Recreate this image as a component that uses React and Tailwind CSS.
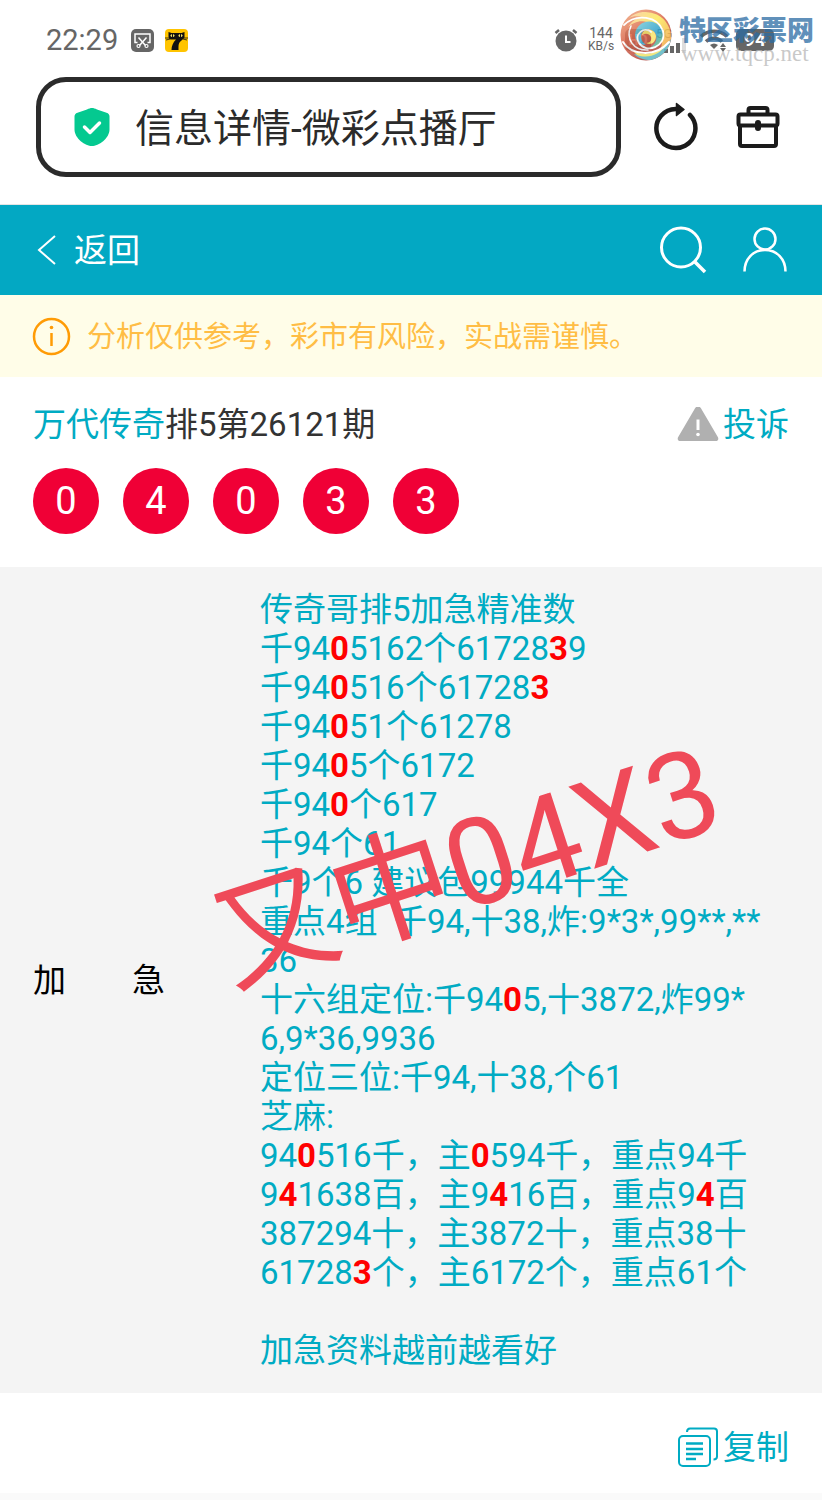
import { useState } from "react";

const BALLS = ["0", "4", "0", "3", "3"];

// [x] marks a digit that hit
const LINES = [
  "传奇哥排5加急精准数",
  "千94[0]5162个61728[3]9",
  "千94[0]516个61728[3]",
  "千94[0]51个61278",
  "千94[0]5个6172",
  "千94[0]个617",
  "千94个61",
  "千9个6 建议包99944千全",
  "重点4组  千94,十38,炸:9*3*,99**,**",
  "36",
  "十六组定位:千94[0]5,十3872,炸99*",
  "6,9*36,9936",
  "定位三位:千94,十38,个61",
  "芝麻:",
  "94[0]516千，主[0]594千，重点94千",
  "9[4]1638百，主9[4]16百，重点9[4]百",
  "387294十，主3872十，重点38十",
  "61728[3]个，主6172个，重点61个",
  "",
  "加急资料越前越看好",
];

function Line({ text }) {
  const parts = text.split(/\[(\d)\]/);
  return (
    <p className="min-h-[39px]">
      {parts.map((part, i) =>
        i % 2 ? (
          <b key={i} className="font-bold text-[#ff0000]">
            {part}
          </b>
        ) : (
          part
        )
      )}
    </p>
  );
}

function StatusBar() {
  return (
    <div className="flex items-center justify-between pl-[46px] pr-12 pt-[22px] h-[58px] text-[#666666]">
      <div className="flex items-center">
        <span className="text-[29px] leading-9 w-[73px]">22:29</span>
        <svg className="ml-3 w-[23px] h-[23px]" viewBox="0 0 23 23" fill="none">
          <rect width="23" height="23" rx="5" fill="#666" />
          <path d="M6.500 13.500H4V5h15v8.500h-2.500" stroke="#fff" strokeWidth="1.500" />
          <path d="M7.500 8.500l7 8M15.500 8.500l-7 8" stroke="#fff" strokeWidth="1.500" />
          <circle cx="7.500" cy="17" r="1.500" stroke="#fff" strokeWidth="1.200" />
          <circle cx="15.500" cy="17" r="1.500" stroke="#fff" strokeWidth="1.200" />
        </svg>
        <svg className="ml-[11px] w-[23px] h-[23px]" viewBox="0 0 23 23">
          <rect width="23" height="23" rx="4" fill="#ffc400" />
          <path d="M3.500 3l3 1h10l3-1v5.500c-2 2.500-3.500 3-5 5-1.200 2-1 4-1 7.500H6.500c0-4 1.500-7.500 4.500-10.500H5.500C4 10 3.500 8 3.500 7z" fill="#111" />
          <path d="M0 9h5M1 11l4-1M18 9h5M18 10l4 1" stroke="#111" strokeWidth=".8" />
          <ellipse cx="7.500" cy="6.500" rx="2" ry="1.500" fill="#f5e26a" />
          <ellipse cx="15.500" cy="6.500" rx="2" ry="1.500" fill="#f5e26a" />
          <path d="M7.500 5v3M15.500 5v3" stroke="#111" strokeWidth="1" />
        </svg>
      </div>
      <div className="flex items-center">
        <svg className="w-[24px] h-[24px]" viewBox="0 0 24 24" fill="none">
          <circle cx="12" cy="13" r="10.500" fill="#666" />
          <path d="M1.500 5L5 2M22.500 5L19 2" stroke="#666" strokeWidth="2.500" />
          <path d="M12 7.500V14h4.500" stroke="#fff" strokeWidth="2" />
        </svg>
        <div className="ml-[9px] w-[28px] text-center text-[14px] leading-[13px]">
          <div>144</div>
          <div className="text-[12px]">KB/s</div>
        </div>
        <div className="ml-[10px] w-[26px] h-[22px] rounded-[5px] bg-[#666666] text-white text-[14px] leading-[22px] text-center font-bold">
          HD
        </div>
        <div className="ml-[5px] flex h-[26px] w-[34px] flex-col">
          <span className="text-[13px] leading-[13px]">5G</span>
          <svg className="-mt-[3px] ml-2 w-[26px] h-[16px]" viewBox="0 0 26 16" fill="#666">
            <path d="M0 12h4v4H0zM6 9h4v7H6zM12 6h4v10h-4z" />
            <path d="M18 1h4v15h-4z" fill="#ddd" />
          </svg>
        </div>
        <svg className="ml-[10px] w-[28px] h-[24px]" viewBox="0 0 28 24" fill="none" stroke="#666" strokeWidth="3.500">
          <path d="M1 8.500c7-7 19-7 26 0" />
          <path d="M6 13.500c4.500-4.500 11.500-4.500 16 0" />
          <path d="M10 17q4-3 8 0l-4 4z" fill="#666" stroke="none" />
          <path d="M23 15l3 4h-6zM23 24l3-4h-6z" fill="#666" stroke="none" />
        </svg>
        <div className="ml-2 w-[38px] h-[22px] rounded-[5px] bg-[#666666] text-white text-[19px] leading-[22px] text-center font-bold">
          94
        </div>
      </div>
    </div>
  );
}

function SiteMark() {
  return (
    <div className="absolute top-[9px] right-[8px] flex items-start gap-[7px]">
      <svg className="w-[52px] h-[52px] opacity-85" viewBox="0 0 52 52">
        <defs>
          <linearGradient id="markRed" x1="0" y1="0" x2=".6" y2="1">
            <stop offset="0" stopColor="#f4b184" />
            <stop offset=".5" stopColor="#d9654a" />
            <stop offset="1" stopColor="#a8403a" />
          </linearGradient>
          <linearGradient id="markYellow" x1="0" y1="0" x2="1" y2=".8">
            <stop offset="0" stopColor="#f9c9a4" />
            <stop offset=".5" stopColor="#fde95a" />
            <stop offset="1" stopColor="#f0a04a" />
          </linearGradient>
          <linearGradient id="markBlue" x1="0" y1="0" x2="1" y2="1">
            <stop offset="0" stopColor="#7fd0d8" />
            <stop offset=".6" stopColor="#2d9fcb" />
            <stop offset="1" stopColor="#8ccb62" />
          </linearGradient>
        </defs>
        <circle cx="26" cy="26" r="25.500" fill="url(#markRed)" />
        <path d="M9 9A25.500 25.500 0 0 1 51 30C47 40 43 43 38 45C47 31 40 16 27 13C19 11 13 14 8 18C12 12 16 9 22 8C17 7 13 7 9 9z" fill="url(#markYellow)" />
        <path d="M51 30A25.500 25.500 0 0 1 31 51C24 51 18 49 14 45C31 48 43 42 51 30z" fill="#5cb7c4" />
        <path d="M45 36C37 45 24 47 13 42L17 46C28 50 40 46 45 36z" fill="#efe36a" />
        <path d="M15 26A14 14 0 0 1 43 27C43 35 36 40 29 39C36 36 38 29 35 24C31 18 22 19 21 27C21 31 23 34 26 36C19 36 15 31 15 26z" fill="url(#markBlue)" />
        <path d="M22 26C23 18 35 19 36 27C36 33 31 37 26 34C30 34 32 31 31 28C29 24 25 24 22 26z" fill="#fbe36a" />
        <g fill="none" stroke="#fff" strokeLinecap="round">
          <path d="M4 16C16 4 38 7 43 22C47 38 26 45 19 34C14 25 24 17 31 23" strokeWidth="1.800" />
          <path d="M3 33C11 46 35 49 49 33" strokeWidth="2" />
          <path d="M11 17C5 30 14 42 28 41" strokeWidth="1.500" />
        </g>
      </svg>
      <div className="pt-1 whitespace-nowrap">
        <div className="text-[27px] leading-[36px] font-black text-[#2b6ca3]/75">特区彩票网</div>
        <div className="-mt-1 pl-[2px] font-['Liberation_Serif',serif] text-[23px] leading-[18px] text-[#bbbbbb]/80">www.tqcp.net</div>
      </div>
    </div>
  );
}

function AddressBar() {
  return (
    <div className="flex items-center pl-9 pr-[42px] pt-[19px] pb-[27px]">
      <label className="flex flex-1 min-w-0 items-center h-[100px] border-[5px] border-[#2b2b2b] rounded-[30px] pl-[33px]">
        <svg className="w-[36px] h-[38px] shrink-0" viewBox="0 0 36 38" fill="none">
          <path
            d="M18 0c1.500 0 3 .5 5 1.500l9.500 3.200c2 .7 3 1.800 3 3.800v13c0 9-11 16.500-17.500 16.500S.5 30.500.5 21.500v-13c0-2 1-3.100 3-3.800L13 1.500C15 .5 16.500 0 18 0z"
            fill="#04c990"
          />
          <path d="M10.500 19l5.500 5.500 9.500-9.500" stroke="#fff" strokeWidth="3.500" strokeLinecap="round" strokeLinejoin="round" />
        </svg>
        <input
          type="text"
          aria-label="地址栏"
          defaultValue="信息详情-微彩点播厅"
          className="ml-[25px] pt-1 w-full min-w-0 bg-transparent text-[39px] text-[#2b2b2b] outline-none"
        />
      </label>
      <button aria-label="刷新" className="ml-8 cursor-pointer">
        <svg className="w-[46px] h-[50px]" viewBox="0 0 46 50" fill="none">
          <path d="M24 7a19.500 19.500 0 1 0 13 6" stroke="#1b1b1b" strokeWidth="4.500" strokeLinecap="round" />
          <path d="M23.500 1.500l7.500 6-7.500 6z" fill="#1b1b1b" stroke="#1b1b1b" strokeWidth="1.500" strokeLinejoin="round" />
        </svg>
      </button>
      <button aria-label="工具箱" className="ml-[37px] cursor-pointer">
        <svg className="w-[44px] h-[44px]" viewBox="0 0 44 44" fill="none" stroke="#1b1b1b" strokeWidth="4" strokeLinejoin="round">
          <path d="M12.500 9V5q0-2 2-2h15q2 0 2 2v4" />
          <rect x="2.500" y="9.500" width="39" height="11" rx="2" />
          <path d="M4 21v18q0 2 2 2h32q2 0 2-2V21" />
          <path d="M22 18v5" strokeWidth="6" strokeLinecap="round" />
        </svg>
      </button>
    </div>
  );
}

function NavBar() {
  return (
    <nav className="flex items-center justify-between h-[90px] pl-[37px] pr-[35px] bg-[#03a8c3] text-white">
      <a href="#" className="flex items-center gap-[17px] text-[33px] leading-[39px]">
        <svg className="w-[20px] h-[30px]" viewBox="0 0 20 30" fill="none" stroke="#fff" strokeWidth="2">
          <path d="M18 1L2 15l16 14" />
        </svg>
        返回
      </a>
      <div className="flex items-center gap-9">
        <button aria-label="搜索" className="cursor-pointer">
          <svg className="w-[48px] h-[48px]" viewBox="0 0 48 48" fill="none" stroke="#fff" strokeWidth="3">
            <circle cx="22" cy="21.500" r="19.500" />
            <path d="M35 35l11 11" strokeWidth="3.500" />
          </svg>
        </button>
        <button aria-label="我的" className="cursor-pointer">
          <svg className="w-[44px] h-[46px]" viewBox="0 0 44 46" fill="none" stroke="#fff" strokeWidth="2.500">
            <circle cx="22" cy="12" r="10.500" />
            <path d="M1.500 44.500C1.500 32 10 23 22 23s20.500 9 20.500 21.500" />
          </svg>
        </button>
      </div>
    </nav>
  );
}

export default function App() {
  const [copied, setCopied] = useState(false);

  const handleCopy = () => {
    const text = LINES.join("\n").replace(/[[\]]/g, "");
    navigator.clipboard?.writeText(text);
    setCopied(true);
  };

  return (
    <div lang="zh-CN" className="min-h-screen bg-[#fafafa] font-[Roboto,'Noto_Sans_CJK_SC',sans-serif]">
      {/* BROWSER CHROME */}
      <header className="relative bg-white border-b border-[#e4e4e4]">
        <StatusBar />
        <AddressBar />
        <SiteMark />
      </header>

      <NavBar />

      {/* NOTICE */}
      <div className="flex items-center h-[82px] px-8 gap-4 bg-[#fffde8] text-[29px] text-[#ffbd45]">
        <svg className="w-[39px] h-[39px] shrink-0" viewBox="0 0 39 39" fill="none" stroke="#ff9b05" strokeWidth="2.500">
          <circle cx="19.500" cy="19.500" r="17.500" />
          <path d="M19.500 16v13" />
          <circle cx="19.500" cy="10.500" r="1.800" fill="#ff9b05" stroke="none" />
        </svg>
        <p className="pt-1">分析仅供参考，彩市有风险，实战需谨慎。</p>
      </div>

      {/* ISSUE */}
      <section className="bg-white px-[33px] pt-7 pb-[33px]">
        <div className="flex items-center justify-between text-[33px] leading-[39px]">
          <h1 className="text-[#333333]">
            <a href="#" className="text-[#00abc3]">万代传奇</a>排5第26121期
          </h1>
          <a href="#" className="flex items-center gap-1 text-[#00abc3]">
            <svg className="w-[42px] h-[35px]" viewBox="0 0 42 35">
              <path d="M18.200 1c1.300-2 4.300-2 5.600 0l17 29c1.200 2 .2 4-2.300 4h-35c-2.500 0-3.500-2-2.300-4z" fill="#b0b0b0" />
              <path d="M21 12.500v10.500" stroke="#fff" strokeWidth="3" />
              <circle cx="21" cy="27.500" r="1.800" fill="#fff" />
            </svg>
            投诉
          </a>
        </div>
        <div className="mt-6 flex gap-6">
          {BALLS.map((n, i) => (
            <span key={i} className="w-[66px] h-[66px] rounded-full bg-[#f00036] text-white text-[38px] leading-[66px] text-center">
              {n}
            </span>
          ))}
        </div>
      </section>

      {/* DETAIL */}
      <section className="relative flex items-center bg-[#f4f4f4] px-[33px] py-[23px] text-[33px] leading-[39px]">
        <h2 className="w-[227px] shrink-0 whitespace-pre text-black">加　　急</h2>
        <div className="whitespace-pre text-[#00abc3]">
          {LINES.map((text, i) => (
            <Line key={i} text={text} />
          ))}
        </div>
        <div className="absolute left-[206px] top-[230px] -rotate-[18deg] whitespace-nowrap text-[121px] leading-[140px] text-[#ef4a59]">
          又中04X3
        </div>
      </section>

      {/* COPY */}
      <footer className="flex items-center justify-end h-[100px] px-[33px] pt-2 bg-white">
        <button onClick={handleCopy} aria-pressed={copied} className="flex items-center gap-[5px] text-[33px] leading-[39px] text-[#00abc3] cursor-pointer">
          <svg className="w-[40px] h-[40px]" viewBox="0 0 40 40" fill="none" stroke="#00abc3" strokeWidth="2">
            <rect x="1" y="9" width="31" height="30" rx="4" />
            <path d="M9 5q0-3.500 3-3.500h24q3 0 3 3v25q0 3-3.500 3" />
            <path d="M8 16.500h17M8 22h17M8 27h17M8 32h10" strokeWidth="2.500" />
          </svg>
          复制
        </button>
      </footer>
    </div>
  );
}
